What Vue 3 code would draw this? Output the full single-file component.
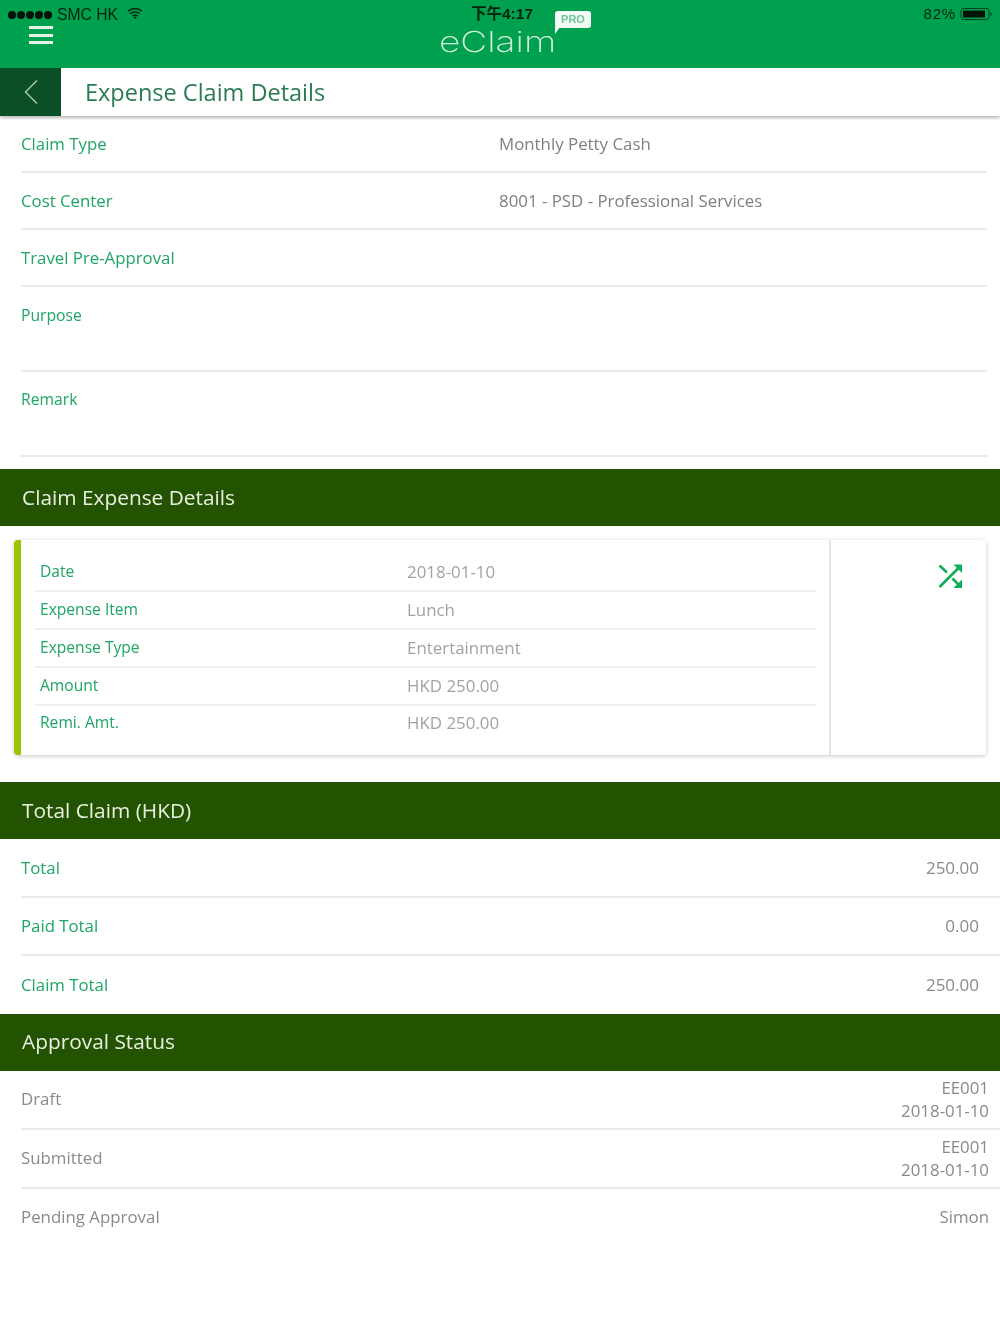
<script setup>
const topRows = [
  { label: 'Claim Type', value: 'Monthly Petty Cash', cls: 'h57' },
  { label: 'Cost Center', value: '8001 - PSD - Professional Services', cls: 'h57' },
  { label: 'Travel Pre-Approval', value: '', cls: 'h57' },
  { label: 'Purpose', value: '', cls: 'tall' },
  { label: 'Remark', value: '', cls: 'tall last' }
]
const cardRows = [
  ['Date', '2018-01-10'],
  ['Expense Item', 'Lunch'],
  ['Expense Type', 'Entertainment'],
  ['Amount', 'HKD 250.00'],
  ['Remi. Amt.', 'HKD 250.00']
]
const totals = [
  ['Total', '250.00'],
  ['Paid Total', '0.00'],
  ['Claim Total', '250.00']
]
const statuses = [
  { label: 'Draft', lines: ['EE001', '2018-01-10'] },
  { label: 'Submitted', lines: ['EE001', '2018-01-10'] },
  { label: 'Pending Approval', lines: ['Simon'] }
]
</script>

<template>
  <div class="page">
    <header class="topbar">
      <div class="status">
        <div class="status-left">
          <span class="dots"><i v-for="n in 5" :key="n"></i></span>
          <span class="carrier">SMC HK</span>
          <svg class="wifi" width="16" height="12" viewBox="0 0 16 12">
            <path d="M1 4.200C5 .6 11 .6 15 4.200M3.300 6.600c2.700-2.300 6.700-2.300 9.400 0M5.600 8.800c1.400-1 3.400-1 4.800 0" fill="none" stroke="#05240f" stroke-width="1.500"/>
            <circle cx="8" cy="10.600" r="1.200" fill="#05240f"/>
          </svg>
        </div>
        <div class="status-time">下午4:17</div>
        <div class="status-right">
          <span class="pct">82%</span>
          <svg width="33" height="14" viewBox="0 0 33 14">
            <rect x="1" y="1.500" width="28" height="11" rx="2.500" fill="none" stroke="#05401d" stroke-width="1"/>
            <rect x="3" y="3.500" width="22" height="7" fill="#04130a"/>
            <path d="M30.500 5c1.500.4 1.500 3.600 0 4z" fill="#05401d"/>
          </svg>
        </div>
      </div>
      <button class="menu" aria-label="Menu"><i></i><i></i><i></i></button>
      <div class="logo">
        <span class="logo-text">eClaim</span>
        <span class="pro">PRO</span>
      </div>
    </header>

    <div class="subbar">
      <div class="back">
        <svg width="14" height="26" viewBox="0 0 14 26"><path d="M13 1.500 1.500 13 13 24.500" fill="none" stroke="#a9c4b2" stroke-width="1.500"/></svg>
      </div>
      <h1>Expense Claim Details</h1>
    </div>

    <section class="fields">
      <div v-for="r in topRows" :key="r.label" class="field" :class="r.cls">
        <span class="label">{{ r.label }}</span>
        <span class="val">{{ r.value }}</span>
      </div>
    </section>

    <h2 class="band first">Claim Expense Details</h2>

    <div class="card">
      <div class="card-main">
        <div v-for="c in cardRows" :key="c[0]" class="card-row">
          <span class="label small">{{ c[0] }}</span>
          <span class="card-val">{{ c[1] }}</span>
        </div>
      </div>
      <div class="card-side">
        <svg width="26" height="26" viewBox="0 0 26 26">
          <g fill="none" stroke="#12ac57" stroke-width="2.600">
            <path d="M2.500 24 22 4.500"/>
            <path d="M2.500 2.500 10 9.500"/>
            <path d="M15.500 15.500 22 22"/>
          </g>
          <path d="M16.500 1.500h8.500v8.500zM25 16.500v8.500h-8.500z" fill="#12ac57"/>
        </svg>
      </div>
    </div>

    <h2 class="band second">Total Claim (HKD)</h2>
    <section>
      <div v-for="t in totals" :key="t[0]" class="total">
        <span class="label">{{ t[0] }}</span>
        <span class="num">{{ t[1] }}</span>
      </div>
    </section>

    <h2 class="band third">Approval Status</h2>
    <section>
      <div v-for="s in statuses" :key="s.label" class="state">
        <span class="state-label">{{ s.label }}</span>
        <span class="state-val"><span v-for="l in s.lines" :key="l">{{ l }}</span></span>
      </div>
    </section>
  </div>
</template>

<style scoped>
.page {
  width: 1000px;
  height: 1334px;
  background: #fff;
  overflow: hidden;
  font-family: "Open Sans", "Noto Sans CJK TC", sans-serif;
  color: #7c7c7c;
  filter: blur(.45px);
}
.topbar {
  position: relative;
  height: 68px;
  background: #00a14e;
}
.status {
  display: flex;
  justify-content: space-between;
  padding: 5px 7px 0 8px;
  height: 18px;
  font-family: "Liberation Sans", "Noto Sans CJK TC", sans-serif;
  font-size: 15.700px;
  line-height: 18px;
  color: #05240f;
}
.status-left { display: flex; align-items: center; gap: 5px; margin-top: 1px; }
.dots { display: flex; gap: 1px; }
.dots i { width: 8px; height: 8px; border-radius: 50%; background: #04130a; }
.wifi { margin-left: 4px; margin-top: -3px; }
.status-time {
  position: absolute;
  left: 471px;
  top: 5px;
  font-size: 15.500px;
  font-weight: 700;
  color: #05240f;
}
.status-right { display: flex; align-items: center; gap: 4px; letter-spacing: .8px; }
.pct { font-size: 15px; }
.menu {
  position: absolute;
  left: 29px;
  top: 26px;
  width: 24px;
  height: 18px;
  padding: 0;
  border: 0;
  background: none;
  display: flex;
  flex-direction: column;
  justify-content: space-between;
}
.menu i { display: block; height: 3px; background: #e4f3e9; }
.logo { position: absolute; left: 439px; top: 11px; width: 155px; height: 46px; }
.logo-text {
  position: absolute;
  left: 0;
  top: 18px;
  font-family: "Inter", sans-serif;
  font-weight: 200;
  font-size: 29px;
  line-height: 26px;
  color: #d4eedd;
  transform: scaleX(1.28);
  transform-origin: left center;
}
.pro {
  position: absolute;
  right: 3px;
  top: 0;
  width: 36px;
  height: 17px;
  background: #f4fbf6;
  border-radius: 3px;
  font-family: "Liberation Sans", sans-serif;
  font-weight: 700;
  font-size: 11px;
  line-height: 17px;
  text-align: center;
  color: #6fc596;
}
.pro::after {
  content: "";
  position: absolute;
  left: 0;
  bottom: -6px;
  border-left: 5px solid #f4fbf6;
  border-bottom: 7px solid transparent;
}
.subbar {
  display: flex;
  align-items: center;
  height: 48px;
  background: #fff;
  box-shadow: 0 2px 3px rgba(0, 0, 0, .28);
  position: relative;
}
.back {
  width: 61px;
  height: 48px;
  background: #0a4f25;
  display: flex;
  align-items: center;
  justify-content: center;
}
.subbar h1 {
  margin: 0 0 0 24px;
  font-size: 23.500px;
  font-weight: 400;
  color: #2a7a52;
}
.fields { padding: 0 13px 0 21px; }
.field {
  display: flex;
  border-bottom: 2px solid #eaeaea;
  box-sizing: border-box;
  padding-top: 17px;
  line-height: 22px;
}
.h57 { height: 57px; }
.tall { height: 85px; }
.tall.last { padding-top: 16px; }
.label { color: #1fa564; font-size: 16.800px; }
.tall .label { font-size: 15.700px; }
.field .label { width: 478px; flex: none; }
.val { color: #7f7f7f; font-size: 16.850px; }
.band {
  margin: 0;
  height: 57px;
  background: #235300;
  color: #e8f0e2;
  font-size: 20.850px;
  font-weight: 400;
  line-height: 57px;
  padding-left: 22px;
}
.band.first { margin-top: 12px; }
.band.second { margin-top: 27px; }
.band.third { line-height: 55px; }
.card {
  display: flex;
  margin: 14px 14px 0;
  height: 215px;
  box-sizing: border-box;
  border-left: 7px solid #9cc400;
  border-radius: 4px;
  background: #fff;
  box-shadow: 0 1px 4px rgba(0, 0, 0, .22);
}
.card-main {
  padding: 14px 13px 0 14px;
  border-right: 2px solid #e4e4e4;
  width: 781px;
}
.card-row {
  display: flex;
  height: 38px;
  box-sizing: border-box;
  border-bottom: 2px solid #eeeeee;
  padding-left: 5px;
  line-height: 34px;
}
.card-row:last-child { border-bottom: 0; line-height: 32px; }
.label.small { width: 367px; flex: none; font-size: 15.600px; }
.card-val { color: #a2a2a2; font-size: 16.900px; line-height: 36px; }
.card-row:last-child .card-val { line-height: 34px; }
.card-side {
  flex: 1;
  display: flex;
  justify-content: flex-end;
  padding: 23px 23px 0 0;
}
.total {
  display: flex;
  justify-content: space-between;
  align-items: center;
  height: 58px;
  box-sizing: border-box;
  margin-left: 21px;
  padding-right: 21px;
  padding-bottom: 2px;
  border-bottom: 2px solid #eaeaea;
}
.total:first-child { height: 59px; padding-bottom: 0; }
.total:last-child { border-bottom: 0; }
.num { color: #8a8a8a; font-size: 17px; }
.state {
  display: flex;
  justify-content: space-between;
  align-items: center;
  height: 59px;
  box-sizing: border-box;
  margin-left: 21px;
  padding-right: 11px;
  padding-bottom: 1px;
  border-bottom: 2px solid #eaeaea;
}
.state:last-child { border-bottom: 0; padding-bottom: 4px; }
.state-label { color: #8a8a8a; font-size: 16.850px; margin-bottom: 2px; }
.state:last-child .state-label { margin-bottom: 0; }
.state-val {
  display: flex;
  flex-direction: column;
  align-items: flex-end;
  color: #8a8a8a;
  font-size: 16.850px;
  line-height: 23px;
}
</style>
